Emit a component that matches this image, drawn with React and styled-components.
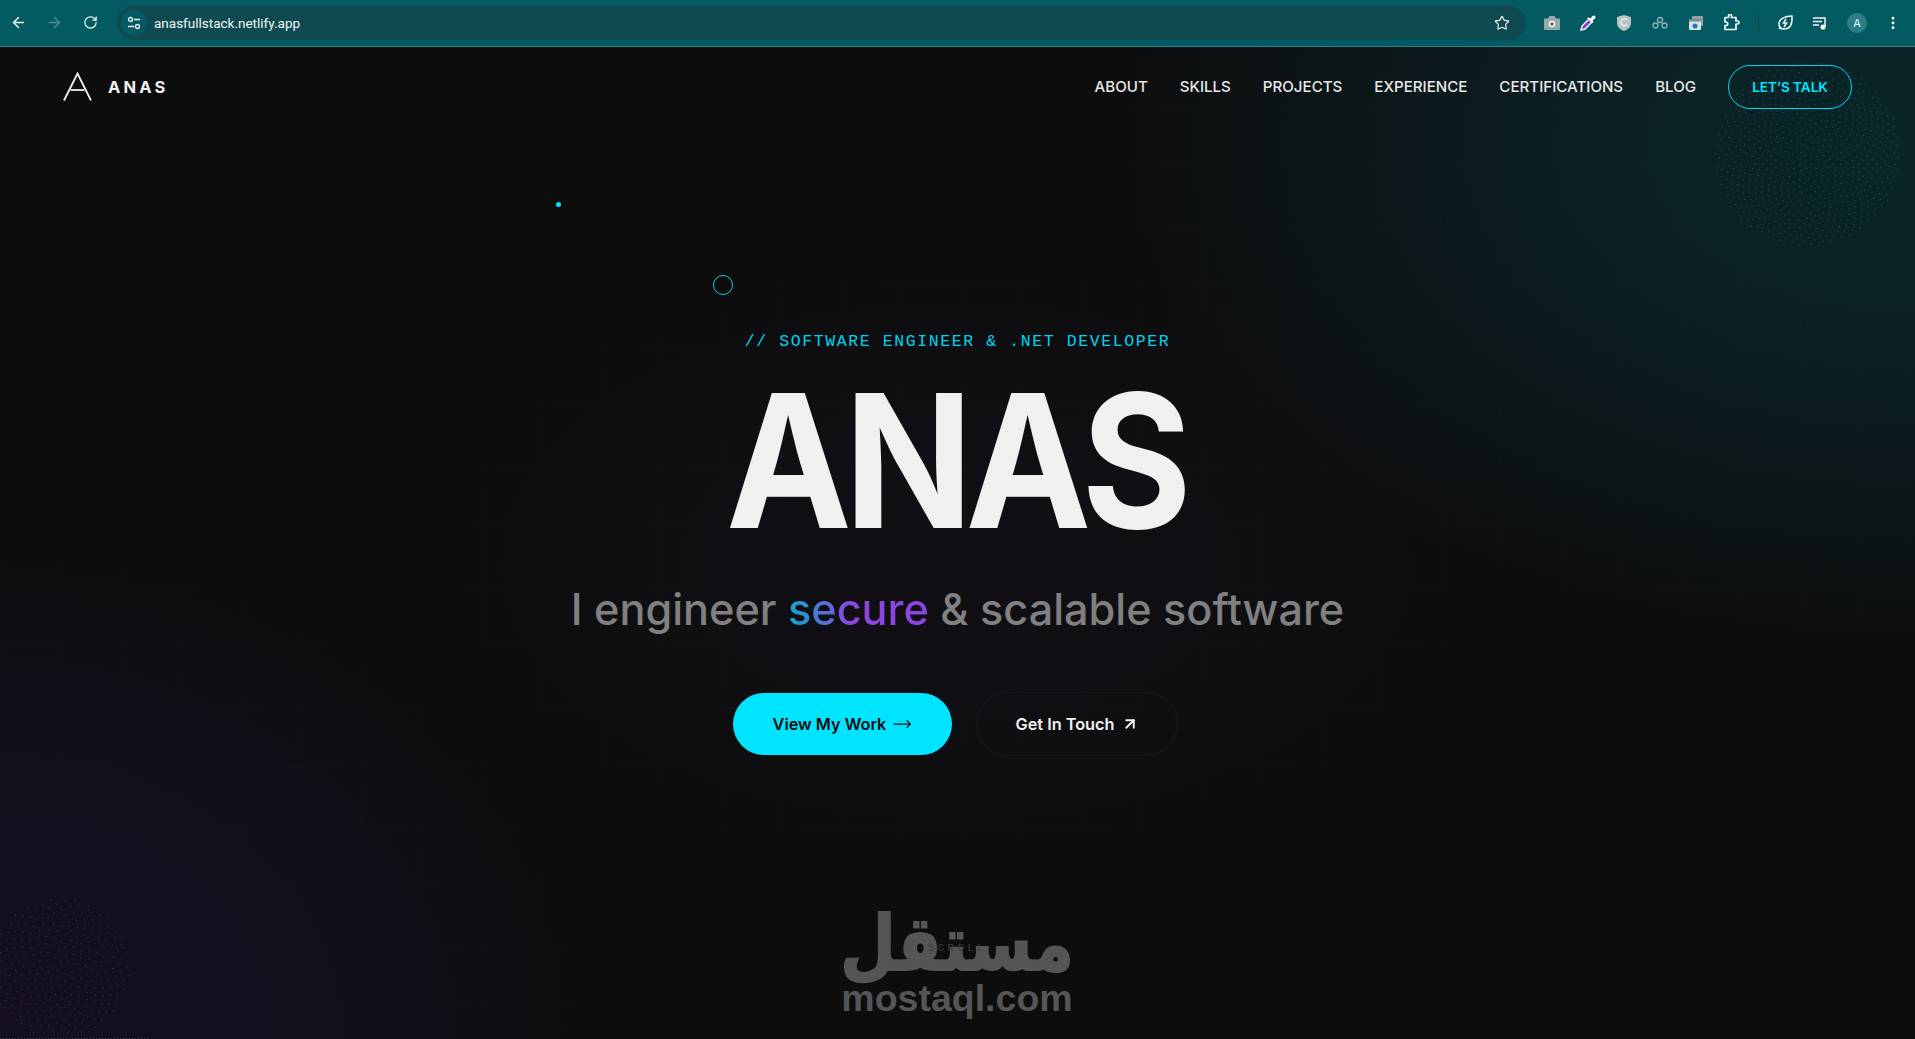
import React from "react";
import styled, { createGlobalStyle } from "styled-components";
import { ArrowLeft, ArrowRight, RotateCw, Star, MoreVertical, ArrowUpRight, MoveRight } from "lucide-react";

const GlobalStyle = createGlobalStyle`
  * { box-sizing: border-box; }
  html, body { margin: 0; padding: 0; background: #0d0d0e; }
  body { font-family: "Inter", "Liberation Sans", sans-serif; overflow: hidden; }
`;

const Shell = styled.div`
  width: 1915px;
  height: 1039px;
  display: flex;
  flex-direction: column;
  overflow: hidden;
`;

const Toolbar = styled.div`
  height: 47px;
  flex: none;
  display: flex;
  align-items: center;
  padding: 0 4px 1px 0;
  background: #035a60;
  border-bottom: 1px solid #2f8087;
  color: #e6f1f2;
`;

const NavIcon = styled.div`
  width: 36px;
  display: flex;
  justify-content: center;
  color: ${(p) => (p.$dim ? "#4f8c91" : "#eef6f6")};
`;

const AddressBar = styled.div`
  flex: 1;
  height: 34px;
  margin: 0 8px 0 9px;
  border-radius: 17px;
  background: #0f4a50;
  display: flex;
  align-items: center;
  padding: 0 16px 0 4px;
  color: #eef6f6;
  font-family: "Roboto", sans-serif;
  font-size: 13.5px;
`;

const SiteBadge = styled.div`
  width: 26px;
  height: 26px;
  border-radius: 50%;
  background: #045a60;
  display: flex;
  align-items: center;
  justify-content: center;
  margin-right: 7px;
`;

const UrlText = styled.span`
  flex: 1;
`;

const ExtIcon = styled.div`
  width: 36px;
  display: flex;
  justify-content: center;
  align-items: center;
`;

const Divider = styled.div`
  width: 1px;
  height: 16px;
  background: #1c3f44;
  margin: 0 8px;
`;

const Avatar = styled.div`
  width: 20px;
  height: 20px;
  border-radius: 50%;
  background: #2a7f86;
  color: #eef6f6;
  font-size: 11px;
  display: flex;
  align-items: center;
  justify-content: center;
`;

const Page = styled.main`
  position: relative;
  flex: 1;
  display: flex;
  flex-direction: column;
  overflow: hidden;
  background:
    linear-gradient(rgba(255, 255, 255, 0.008) 1px, transparent 1px) 0 0 / 60px 60px,
    linear-gradient(90deg, rgba(255, 255, 255, 0.008) 1px, transparent 1px) 0 0 / 60px 60px,
    radial-gradient(ellipse 800px 500px at 100% 10%, #0b2529 0%, #0b2226 32%, rgba(11, 34, 38, 0) 100%),
    radial-gradient(ellipse 600px 500px at 0% 100%, #150f20 0%, #140f1e 45%, rgba(20, 15, 30, 0) 100%),
    radial-gradient(ellipse 560px 320px at 50% 52%, #110f15 0%, rgba(16, 14, 20, 0) 100%),
    #0d0d0e;
`;

const Header = styled.header`
  position: relative;
  display: flex;
  align-items: center;
  justify-content: space-between;
  padding: 18px 63px;
`;

const Brand = styled.div`
  display: flex;
  align-items: center;
  gap: 15px;
  color: #f0f0f0;
  font-size: 16.5px;
  font-weight: 700;
  letter-spacing: 3.2px;
`;

const NavLinks = styled.nav`
  display: flex;
  align-items: center;
  gap: 32px;
`;

const NavLink = styled.a`
  color: #e8e8e8;
  font-size: 15.1px;
  font-weight: 500;
  padding-bottom: 2px;
`;

const TalkButton = styled.a`
  width: 124px;
  height: 44px;
  border: 1.5px solid #00d4f0;
  border-radius: 22px;
  display: flex;
  align-items: center;
  justify-content: center;
  color: #00e5ff;
  font-size: 13.5px;
  font-weight: 600;
`;

const Hero = styled.section`
  position: relative;
  display: flex;
  flex-direction: column;
  align-items: center;
  padding-top: 205px;
`;

const Eyebrow = styled.div`
  font-family: "Liberation Mono", monospace;
  font-size: 16.5px;
  line-height: 20px;
  letter-spacing: 1.6px;
  color: #00d4f0;
`;

const Title = styled.h1`
  margin: 34px 0 0;
  font-family: "Inter", sans-serif;
  font-size: 186px;
  line-height: 150px;
  font-weight: 700;
  letter-spacing: -8px;
  color: #f0f0f0;
  transform: translateX(-2px) scaleX(0.905);
`;

const Subtitle = styled.p`
  margin: 43px 0 0;
  font-family: "Inter", sans-serif;
  font-size: 43.2px;
  line-height: 60px;
  font-weight: 500;
  color: #808080;
`;

const Accent = styled.span`
  background: linear-gradient(90deg, #10a8d0, #8b45e0 45%, #8b45e0);
  -webkit-background-clip: text;
  background-clip: text;
  color: transparent;
`;

const Actions = styled.div`
  display: flex;
  align-items: center;
  gap: 24px;
  margin: 53px 4px 0 0;
`;

const CtaButton = styled.a`
  height: ${(p) => (p.$primary ? "62px" : "64px")};
  width: ${(p) => (p.$primary ? "219px" : "202px")};
  border-radius: 32px;
  display: flex;
  align-items: center;
  justify-content: center;
  gap: 6px;
  font-size: 16.3px;
  font-weight: 600;
  background: ${(p) => (p.$primary ? "#00e5ff" : "transparent")};
  color: ${(p) => (p.$primary ? "#0c0c0d" : "#f0f0f0")};
  border: ${(p) => (p.$primary ? "none" : "1px solid #17161f")};
`;

const Floater = styled.span`
  position: absolute;
  border-radius: 50%;
  left: ${(p) => p.$x}px;
  top: ${(p) => p.$y}px;
  width: ${(p) => p.$size}px;
  height: ${(p) => p.$size}px;
  background: ${(p) => (p.$ring ? "transparent" : "#00e5ff")};
  border: ${(p) => (p.$ring ? "1px solid #00d4f0" : "none")};
`;

const Halftone = styled.svg`
  position: absolute;
  left: ${(p) => p.$x}px;
  top: ${(p) => p.$y}px;
  pointer-events: none;
`;

const EdgeStrip = styled.div`
  position: absolute;
  left: 0;
  bottom: 0;
  width: 148px;
  height: 1px;
  background: repeating-linear-gradient(90deg, rgba(150, 170, 180, 0.3) 0 1px, transparent 1px 3px);
`;

const ScrollHint = styled.div`
  position: absolute;
  left: 928px;
  top: 895px;
  font-family: "Liberation Mono", monospace;
  font-size: 11px;
  letter-spacing: 3.2px;
  color: #3d3d3f;
  z-index: 2;
`;

const Watermark = styled.div`
  position: absolute;
  left: 842px;
  top: 856px;
  width: 230px;
  display: flex;
  flex-direction: column;
  align-items: center;
  color: #555;
`;

const WatermarkArabic = styled.div`
  font-family: "DejaVu Sans", sans-serif;
  font-size: 76px;
  line-height: 81px;
  font-weight: 700;
  -webkit-text-stroke: 2px #555;
  transform: scaleX(0.84);
`;

const WatermarkLatin = styled.div`
  margin-top: -6px;
  font-family: "Liberation Sans", sans-serif;
  font-size: 37.5px;
  line-height: 40px;
  font-weight: 700;
`;

const LINKS = ["ABOUT", "SKILLS", "PROJECTS", "EXPERIENCE", "CERTIFICATIONS", "BLOG"];

// sunflower scatter, gives the same loose dot texture as the reference
const sunflower = (r, count) => {
  const dots = [];
  for (let i = 1; i <= count; i++) {
    const d = r * Math.sqrt(i / count);
    const a = i * 2.39996;
    dots.push([r + d * Math.cos(a), r + d * Math.sin(a)]);
  }
  return dots;
};

const DotCircle = ({ x, y, r, count, color }) => (
  <Halftone $x={x} $y={y} width={r * 2} height={r * 2}>
    {sunflower(r, count).map(([cx, cy], i) => (
      <rect key={i} x={cx} y={cy} width="1" height="1" fill={color} />
    ))}
  </Halftone>
);

const LogoMark = () => (
  <svg width="30" height="30" viewBox="0 0 30 30" fill="none" stroke="#f0f0f0" strokeWidth="1.8">
    <path d="M1 28.5 L14.5 1.5 L28 28.5" />
    <path d="M7.5 18 H21.5" />
  </svg>
);

const Tune = () => (
  <svg width="16" height="16" viewBox="0 0 16 16" fill="none" stroke="#eef6f6" strokeWidth="1.3">
    <circle cx="4.5" cy="4.5" r="2" />
    <path d="M8 4.5h6M2 11.5h6" />
    <circle cx="11.5" cy="11.5" r="2" />
  </svg>
);

const Camera = () => (
  <svg width="18" height="16" viewBox="0 0 18 16">
    <path d="M1 4.5a1 1 0 0 1 1-1h3L6.500 1h5L13 3.500h3a1 1 0 0 1 1 1V14a1 1 0 0 1-1 1H2a1 1 0 0 1-1-1z" fill="#9aa6a8" />
    <circle cx="9" cy="9" r="3.300" fill="#f4f4f4" />
    <circle cx="9" cy="9" r="1.700" fill="#5a6668" />
  </svg>
);

const Dropper = () => (
  <svg width="18" height="18" viewBox="0 0 18 18">
    <path d="M2 16l1-4 7-7 3 3-7 7z" fill="#7b3fd0" stroke="#fff" strokeWidth="1.400" />
    <path d="M10 3.500l1.500 1L13.500 2a1.500 1.500 0 0 1 2.500 2.500L13.500 6.500l1 1.500-1.500 1-5-5z" fill="#fff" />
  </svg>
);

const Shield = () => (
  <svg width="16" height="18" viewBox="0 0 16 18">
    <path d="M8 1l7 2v6c0 4-3 6.500-7 8-4-1.500-7-4-7-8V3z" fill="#b6c2c4" />
    <path d="M11 6a3.500 3.500 0 1 0 0 4.500" fill="none" stroke="#e8eeee" strokeWidth="1.400" />
  </svg>
);

const Links = () => (
  <svg width="16" height="14" viewBox="0 0 16 14" fill="none" stroke="#8fb3b6" strokeWidth="1.300">
    <circle cx="3.500" cy="9.500" r="2.500" />
    <circle cx="8" cy="4" r="2.500" />
    <circle cx="12.500" cy="9.500" r="2.500" />
  </svg>
);

const Windows = () => (
  <svg width="16" height="16" viewBox="0 0 16 16">
    <rect x="4" y="1" width="11" height="10" rx="1" fill="#8fa3a6" />
    <rect x="1" y="4" width="12" height="11" rx="1" fill="#d9e2e3" />
    <rect x="1" y="4" width="12" height="2.500" fill="#7a8e91" />
    <circle cx="7" cy="11" r="2.500" fill="#1d78c9" />
  </svg>
);

const Puzzle = () => (
  <svg width="16" height="17" viewBox="0 0 16 17" fill="none" stroke="#f2f7f7" strokeWidth="1.700" strokeLinejoin="round">
    <path d="M1 3.500h3.500V2a1.500 1.500 0 0 1 3 0v1.500H12V7h1.500a1.500 1.500 0 0 1 0 3H12v5.500H1V11.500h1a1.500 1.500 0 0 0 0-3.500H1z" />
  </svg>
);

const Leaf = () => (
  <svg width="18" height="18" viewBox="0 0 18 18" fill="none" stroke="#f2f7f7" strokeWidth="1.500">
    <path d="M16 2c.5 7-1 13-8 13-3 0-5-2-5-5 0-5 6-8 13-8z" />
    <path d="M10 5L7.500 9h3L8 13M3 15l2-2" />
  </svg>
);

const Playlist = () => (
  <svg width="16" height="14" viewBox="0 0 16 14" fill="none" stroke="#f2f7f7" strokeWidth="1.500">
    <path d="M0 2h12M0 5.500h9M0 9h6" />
    <path d="M12 1.500V11" />
    <circle cx="10" cy="11" r="1.800" fill="#f2f7f7" />
  </svg>
);

const App = () => (
  <Shell>
    <GlobalStyle />
    <Toolbar>
      <NavIcon><ArrowLeft size={17} strokeWidth={2} /></NavIcon>
      <NavIcon $dim><ArrowRight size={17} strokeWidth={2} /></NavIcon>
      <NavIcon><RotateCw size={15} strokeWidth={2} /></NavIcon>
      <AddressBar>
        <SiteBadge><Tune /></SiteBadge>
        <UrlText>anasfullstack.netlify.app</UrlText>
        <Star size={16} strokeWidth={1.7} />
      </AddressBar>
      <ExtIcon><Camera /></ExtIcon>
      <ExtIcon><Dropper /></ExtIcon>
      <ExtIcon><Shield /></ExtIcon>
      <ExtIcon><Links /></ExtIcon>
      <ExtIcon><Windows /></ExtIcon>
      <ExtIcon><Puzzle /></ExtIcon>
      <Divider />
      <ExtIcon><Leaf /></ExtIcon>
      <ExtIcon><Playlist /></ExtIcon>
      <ExtIcon><Avatar>A</Avatar></ExtIcon>
      <ExtIcon><MoreVertical size={16} strokeWidth={2.4} color="#f2f7f7" /></ExtIcon>
    </Toolbar>
    <Page>
      <DotCircle x={1714} y={13} r={93} count={700} color="rgba(0, 229, 255, 0.32)" />
      <DotCircle x={-10} y={850} r={70} count={260} color="rgba(150, 190, 200, 0.28)" />
      <EdgeStrip />
      <Floater $x={556} $y={155} $size={5} />
      <Floater $ring $x={713} $y={228} $size={20} />
      <Header>
        <Brand>
          <LogoMark />
          ANAS
        </Brand>
        <NavLinks>
          {LINKS.map((l) => (
            <NavLink key={l}>{l}</NavLink>
          ))}
          <TalkButton>LET’S TALK</TalkButton>
        </NavLinks>
      </Header>
      <Hero>
        <Eyebrow>// SOFTWARE ENGINEER &amp; .NET DEVELOPER</Eyebrow>
        <Title>ANAS</Title>
        <Subtitle>
          I engineer <Accent>secure</Accent> &amp; scalable software
        </Subtitle>
        <Actions>
          <CtaButton $primary>
            View My Work <MoveRight size={20} strokeWidth={1.5} />
          </CtaButton>
          <CtaButton>
            Get In Touch <ArrowUpRight size={18} strokeWidth={2.6} />
          </CtaButton>
        </Actions>
      </Hero>
      <Watermark>
        <WatermarkArabic>مستقل</WatermarkArabic>
        <WatermarkLatin>mostaql.com</WatermarkLatin>
      </Watermark>
      <ScrollHint>SCROLL</ScrollHint>
    </Page>
  </Shell>
);

export default App;
